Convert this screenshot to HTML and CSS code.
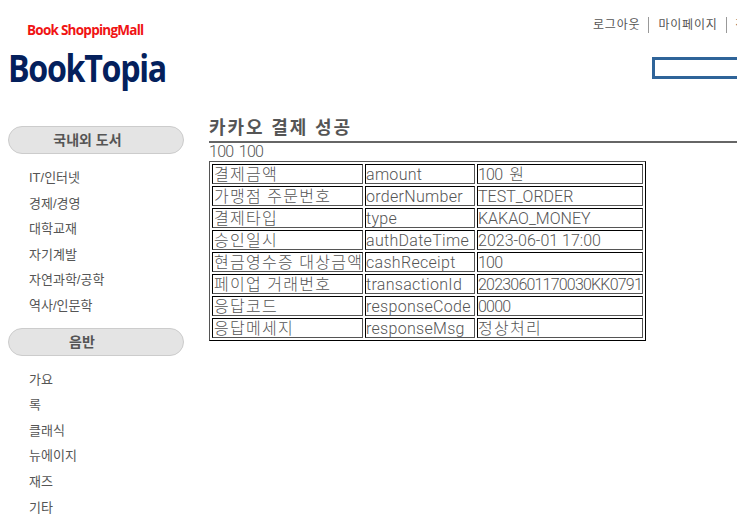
FILE: index.html
```html
<!DOCTYPE html>
<html lang="ko">
<head>
    <meta charset="UTF-8">
    <meta name="viewport" content="width=device-width, initial-scale=1.0">
    <title>BookTopia</title>
    <link rel="stylesheet" href="styles.css">
</head>
<body>
    <div class="page">
        <header class="top">
            <div class="logo">
                <p class="logo-sub">Book ShoppingMall</p>
                <p class="logo-main">BookTopia</p>
            </div>
            <div class="top-right">
                <ul class="user-menu">
                    <li>로그아웃</li>
                    <li>마이페이지</li>
                    <li>장바구니</li>
                </ul>
                <div class="search-box"></div>
            </div>
        </header>

        <div class="content">
            <nav class="side">
                <h3 class="side-title">국내외 도서</h3>
                <ul class="side-list">
                    <li>IT/인터넷</li>
                    <li>경제/경영</li>
                    <li>대학교재</li>
                    <li>자기계발</li>
                    <li>자연과학/공학</li>
                    <li>역사/인문학</li>
                </ul>
                <h3 class="side-title side-title-short">음반</h3>
                <ul class="side-list">
                    <li>가요</li>
                    <li>록</li>
                    <li>클래식</li>
                    <li>뉴에이지</li>
                    <li>재즈</li>
                    <li>기타</li>
                </ul>
            </nav>

            <main class="main">
                <h2 class="main-title">카카오 결제 성공</h2>
                <div class="amounts">100 100</div>
                <table class="result" border="1">
                    <tr><td class="col-name">결제금액</td><td class="col-key">amount</td><td class="col-value won">100 원</td></tr>
                    <tr><td class="col-name">가맹점 주문번호</td><td class="col-key">orderNumber</td><td class="col-value wide">TEST_ORDER</td></tr>
                    <tr><td class="col-name">결제타입</td><td class="col-key">type</td><td class="col-value wide">KAKAO_MONEY</td></tr>
                    <tr><td class="col-name">승인일시</td><td class="col-key">authDateTime</td><td class="col-value wide">2023-06-01 17:00</td></tr>
                    <tr><td class="col-name">현금영수증 대상금액</td><td class="col-key">cashReceipt</td><td class="col-value">100</td></tr>
                    <tr><td class="col-name">페이업 거래번호</td><td class="col-key">transactionId</td><td class="col-value">20230601170030KK0791</td></tr>
                    <tr><td class="col-name">응답코드</td><td class="col-key">responseCode</td><td class="col-value">0000</td></tr>
                    <tr><td class="col-name">응답메세지</td><td class="col-key">responseMsg</td><td class="col-value hangul">정상처리</td></tr>
                </table>
            </main>
        </div>
    </div>
</body>
</html>
```

FILE: styles.css
```css
/* 기본 */
html, body {
    margin: 0;
    padding: 0;
    height: 530px;
    overflow: hidden;
    background: #fff;
}

body {
    font-family: "Liberation Sans", "Noto Sans CJK KR", sans-serif;
    color: #555;
}

ul {
    list-style: none;
    margin: 0;
    padding: 0;
}

.page {
    width: 1000px;
}

/* 상단 */
.top {
    display: flex;
    height: 117px;
}

.logo {
    width: 652px;
    padding: 21px 0 0 8px;
    box-sizing: border-box;
}

.logo-sub {
    margin: 0 0 0 19px;
    font-family: "Open Sans", sans-serif;
    font-size: 13.5px;
    font-weight: 700;
    line-height: 18px;
    letter-spacing: -0.75px;
    color: #f01414;
}

.logo-main {
    margin: 5px 0 0;
    font-family: "Open Sans", sans-serif;
    font-size: 37px;
    font-weight: 700;
    line-height: 48px;
    letter-spacing: -1.5px;
    color: #04205c;
    transform: scaleX(0.87);
    transform-origin: left;
}

.top-right {
    flex: 1;
}

.user-menu {
    display: flex;
    margin: 17px 0 0 -59px;
    font-size: 12px;
    line-height: 16px;
    letter-spacing: 0.8px;
}

.user-menu li {
    padding-right: 8px;
    margin-right: 9px;
    border-right: 1px solid #999;
}

.search-box {
    width: 300px;
    height: 16px;
    margin-top: 24px;
    border: 3px solid #2f6499;
}

/* 내용 */
.content {
    display: flex;
}

.side {
    width: 176px;
    margin-left: 8px;
    padding-top: 9px;
}

.side-title {
    height: 28px;
    margin: 0;
    padding-right: 17px;
    box-sizing: border-box;
    border: 1px solid #ccc;
    border-radius: 14px;
    background: #e4e4e4;
    font-size: 14px;
    font-weight: 700;
    line-height: 26px;
    text-align: center;
}

.side-title-short {
    padding-right: 28px;
}

.side-list {
    padding: 11px 0 9px 21px;
    font-size: 13px;
    line-height: 25.6px;
}

.main {
    flex: 1;
    margin-left: 25px;
}

.main-title {
    margin: 0;
    padding: 1px 0 2px;
    border-bottom: 2px solid #666;
    font-size: 18px;
    font-weight: 700;
    line-height: 21px;
    letter-spacing: 1.9px;
}

.amounts {
    font-family: Roboto, sans-serif;
    font-size: 16px;
    font-weight: 300;
    line-height: 18px;
    letter-spacing: -0.7px;
    word-spacing: 2px;
}

/* 결제 결과 표 */
.result {
    font-family: Roboto, "Noto Sans CJK KR", sans-serif;
    font-size: 16px;
    font-weight: 300;
    table-layout: fixed;
    width: 437px;
    border-color: #555;
}

.result td {
    height: 16px;
    padding: 2px 2px 0 0;
    line-height: 16px;
    white-space: nowrap;
    border-color: #555;
}

.result .col-name {
    width: 147px;
    padding-left: 1px;
    padding-right: 1px;
    letter-spacing: 1.3px;
}

.result .col-key {
    width: 106px;
    letter-spacing: 0.3px;
}

.result .col-value {
    letter-spacing: -0.8px;
}

.result .wide {
    letter-spacing: 0;
}

.result .won {
    word-spacing: 4px;
}

.result .hangul {
    letter-spacing: 1.3px;
}
```
